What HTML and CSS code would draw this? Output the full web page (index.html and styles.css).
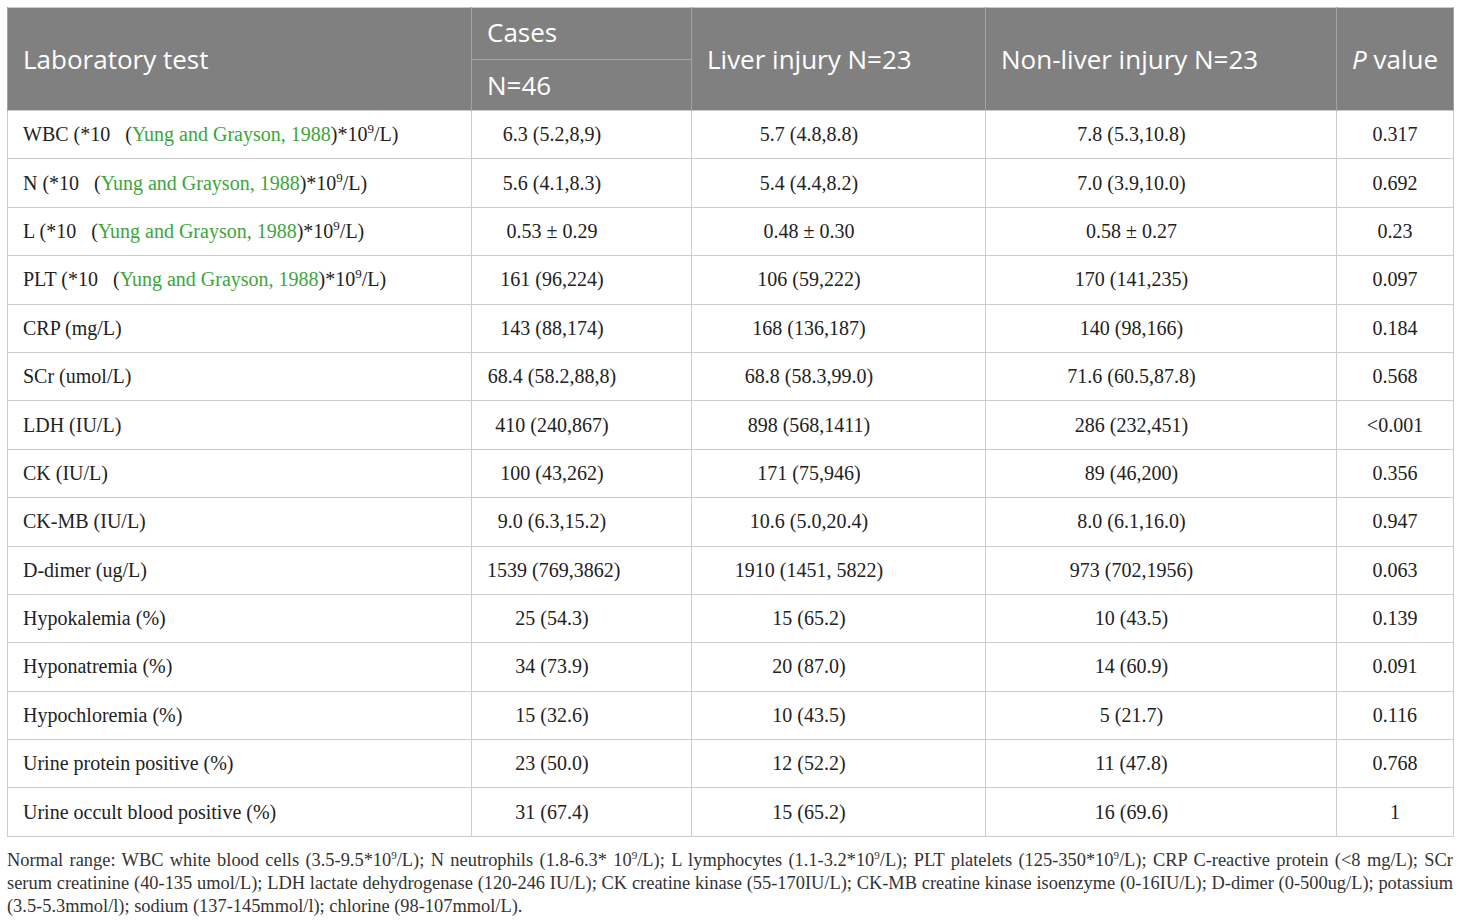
FILE: index.html
```html
<!DOCTYPE html>
<html lang="en">
<head>
  <meta charset="UTF-8">
  <title>Laboratory tests</title>
  <link rel="stylesheet" href="styles.css">
</head>
<body>
  <div class="tabla-wrap">
    <table class="tabla">
      <colgroup>
        <col class="c1"><col class="c2"><col class="c3"><col class="c4"><col class="c5">
      </colgroup>
      <thead>
        <tr class="cab1">
          <th rowspan="2">Laboratory test</th>
          <th class="sub">Cases</th>
          <th rowspan="2">Liver injury N=23</th>
          <th rowspan="2">Non-liver injury N=23</th>
          <th rowspan="2"><i>P</i> value</th>
        </tr>
        <tr class="cab2">
          <th>N=46</th>
        </tr>
      </thead>
      <tbody>
        <tr><td>WBC (*10&nbsp;&nbsp;&nbsp;(<span class="cita">Yung and Grayson, 1988</span>)*10<sup>9</sup>/L)</td><td>6.3 (5.2,8,9)</td><td>5.7 (4.8,8.8)</td><td>7.8 (5.3,10.8)</td><td>0.317</td></tr>
        <tr><td>N (*10&nbsp;&nbsp;&nbsp;(<span class="cita">Yung and Grayson, 1988</span>)*10<sup>9</sup>/L)</td><td>5.6 (4.1,8.3)</td><td>5.4 (4.4,8.2)</td><td>7.0 (3.9,10.0)</td><td>0.692</td></tr>
        <tr><td>L (*10&nbsp;&nbsp;&nbsp;(<span class="cita">Yung and Grayson, 1988</span>)*10<sup>9</sup>/L)</td><td>0.53 ± 0.29</td><td>0.48 ± 0.30</td><td>0.58 ± 0.27</td><td>0.23</td></tr>
        <tr><td>PLT (*10&nbsp;&nbsp;&nbsp;(<span class="cita">Yung and Grayson, 1988</span>)*10<sup>9</sup>/L)</td><td>161 (96,224)</td><td>106 (59,222)</td><td>170 (141,235)</td><td>0.097</td></tr>
        <tr><td>CRP (mg/L)</td><td>143 (88,174)</td><td>168 (136,187)</td><td>140 (98,166)</td><td>0.184</td></tr>
        <tr><td>SCr (umol/L)</td><td>68.4 (58.2,88,8)</td><td>68.8 (58.3,99.0)</td><td>71.6 (60.5,87.8)</td><td>0.568</td></tr>
        <tr><td>LDH (IU/L)</td><td>410 (240,867)</td><td>898 (568,1411)</td><td>286 (232,451)</td><td>&lt;0.001</td></tr>
        <tr><td>CK (IU/L)</td><td>100 (43,262)</td><td>171 (75,946)</td><td>89 (46,200)</td><td>0.356</td></tr>
        <tr><td>CK-MB (IU/L)</td><td>9.0 (6.3,15.2)</td><td>10.6 (5.0,20.4)</td><td>8.0 (6.1,16.0)</td><td>0.947</td></tr>
        <tr><td>D-dimer (ug/L)</td><td>1539 (769,3862)</td><td>1910 (1451, 5822)</td><td>973 (702,1956)</td><td>0.063</td></tr>
        <tr><td>Hypokalemia (%)</td><td>25 (54.3)</td><td>15 (65.2)</td><td>10 (43.5)</td><td>0.139</td></tr>
        <tr><td>Hyponatremia (%)</td><td>34 (73.9)</td><td>20 (87.0)</td><td>14 (60.9)</td><td>0.091</td></tr>
        <tr><td>Hypochloremia (%)</td><td>15 (32.6)</td><td>10 (43.5)</td><td>5 (21.7)</td><td>0.116</td></tr>
        <tr><td>Urine protein positive (%)</td><td>23 (50.0)</td><td>12 (52.2)</td><td>11 (47.8)</td><td>0.768</td></tr>
        <tr><td>Urine occult blood positive (%)</td><td>31 (67.4)</td><td>15 (65.2)</td><td>16 (69.6)</td><td>1</td></tr>
      </tbody>
    </table>
    <p class="nota">Normal range: WBC white blood cells (3.5-9.5*10<sup>9</sup>/L); N neutrophils (1.8-6.3* 10<sup>9</sup>/L); L lymphocytes (1.1-3.2*10<sup>9</sup>/L); PLT platelets (125-350*10<sup>9</sup>/L); CRP C-reactive protein (&lt;8 mg/L); SCr serum creatinine (40-135 umol/L); LDH lactate dehydrogenase (120-246 IU/L); CK creatine kinase (55-170IU/L); CK-MB creatine kinase isoenzyme (0-16IU/L); D-dimer (0-500ug/L); potassium (3.5-5.3mmol/l); sodium (137-145mmol/l); chlorine (98-107mmol/L).</p>
  </div>
</body>
</html>
```

FILE: styles.css
```css
body {
  margin: 0;
  background: #fff;
  color: #222;
  font-family: 'Liberation Serif', serif;
}

.tabla-wrap {
  width: 1446px;
  margin: 7px 0 0 7px;
}

.tabla {
  width: 1446px;
  border-collapse: collapse;
  table-layout: fixed;
  border: 1px solid #c9c9c9;
}

.c1 { width: 464px; }
.c2 { width: 220px; }
.c3 { width: 294px; }
.c4 { width: 351px; }
.c5 { width: 117px; }

/* cabecera gris */
thead th {
  background: #808080;
  color: #fff;
  font-family: 'Open Sans', sans-serif;
  font-weight: 400;
  font-size: 26px;
  text-align: left;
  padding: 0 15px;
  border-left: 1px solid #a3a3a3;
  border-right: 1px solid #a3a3a3;
  white-space: nowrap;
}

.cab1 th { height: 51px; }
.cab2 th { height: 50px; }

th.sub {
  height: 48px;
  padding-bottom: 3px;
  border-bottom: 1px solid #a3a3a3;
}

tbody td {
  height: 47.4px;
  padding: 0 74px 0 15px;
  font-size: 20px;
  border: 1px solid #cdcdcd;
  text-align: center;
  white-space: nowrap;
}

tbody td:first-child {
  text-align: left;
  padding-right: 15px;
}

tbody td:last-child {
  padding: 0 15px;
}

sup {
  font-size: 13px;
  line-height: 0;
  vertical-align: 8px;
}

.cita {
  color: #3ba63b;
}

.nota {
  margin: 12px 0 0 0;
  font-size: 18.4px;
  line-height: 23px;
  color: #333;
  text-align: justify;
}

.nota sup {
  font-size: 11px;
  vertical-align: 7px;
}
```
